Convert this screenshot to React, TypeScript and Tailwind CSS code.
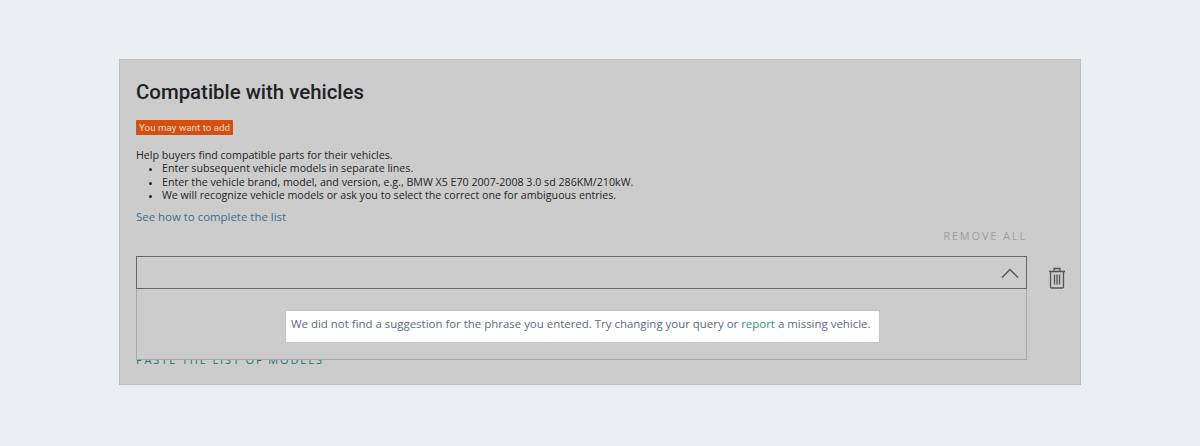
import React from "react";

export default function App() {
  return (
    <div className="h-[446px] w-[1200px] overflow-hidden bg-[#ebeff2] pt-[59px] pl-[119px] font-['Open_Sans',sans-serif]">
      <div className="h-[326px] w-[962px] border border-[#bdbdbd] bg-[#cccccc] pt-[17px] pl-4 pr-[53px]">
        <h2 className="font-['Roboto',sans-serif] text-[20.4px] font-medium leading-[30px] text-[#1f2225]">Compatible with vehicles</h2>
        <div className="mt-[13px] inline-block h-[15px] rounded-[1px] bg-[#d64f0c] px-[3px] font-['Roboto',sans-serif] text-[9.8px] leading-[15px] text-[#ebd9cf]">You may want to add</div>
        <div className="mt-[12px] text-[10.67px] leading-[13.3px] text-[#252525]">
          <p>Help buyers find compatible parts for their vehicles.</p>
          <ul className="list-disc pl-[26px] marker:text-[9px]">
            <li>Enter subsequent vehicle models in separate lines.</li>
            <li>Enter the vehicle brand, model, and version, e.g., BMW X5 E70 2007-2008 3.0 sd 286KM/210kW.</li>
            <li>We will recognize vehicle models or ask you to select the correct one for ambiguous entries.</li>
          </ul>
        </div>
        <a className="mt-[7px] block text-[11.43px] leading-[16px] text-[#3c6f8c]">See how to complete the list</a>
        <div className="mt-[4px] text-right text-[11px] leading-[14px] tracking-[1.85px] text-[#a0a0a0]">REMOVE ALL</div>
        <div className="relative mt-[13px] h-[95px]">
          <div className="flex h-[33px] items-center justify-end border border-[#666666] pr-[7px]">
            <svg width="18" height="10" viewBox="0 0 18 10" fill="none" stroke="#555555" strokeWidth="1.4"><path d="M1 9.5 9 1.5l8 8" /></svg>
          </div>
          <div className="absolute left-0 top-[33px] z-10 flex h-[71px] w-full items-center justify-center border-x border-b border-[#a8a8a8] bg-[#cccccc]">
            <div className="ml-[2px] mt-[4px] flex h-[33px] w-[595px] items-center whitespace-nowrap border border-[#c4c4c4] bg-white pb-[5px] pl-[5px] text-[11.45px] text-[#5a6a85]">
              <span>We did not find a suggestion for the phrase you entered. Try changing your query or <span className="text-[#2f8f80]">report</span> a missing vehicle.</span>
            </div>
          </div>
          <svg className="absolute right-[-39px] top-[11px]" width="18" height="22" viewBox="0 0 18 22" fill="none" stroke="#555555" strokeWidth="1.3">
            <path d="M1 4.5h16M6 4.5V1.5h6v3M2.5 4.5v15.5a1 1 0 0 0 1 1h11a1 1 0 0 0 1-1V4.5M6.5 7.5v10M9 7.5v10M11.5 7.5v10" />
          </svg>
          <div className="absolute left-0 top-[97px] text-[11px] leading-[14px] tracking-[1.87px] text-[#277272]">PASTE THE LIST OF MODELS</div>
        </div>
      </div>
    </div>
  );
}
